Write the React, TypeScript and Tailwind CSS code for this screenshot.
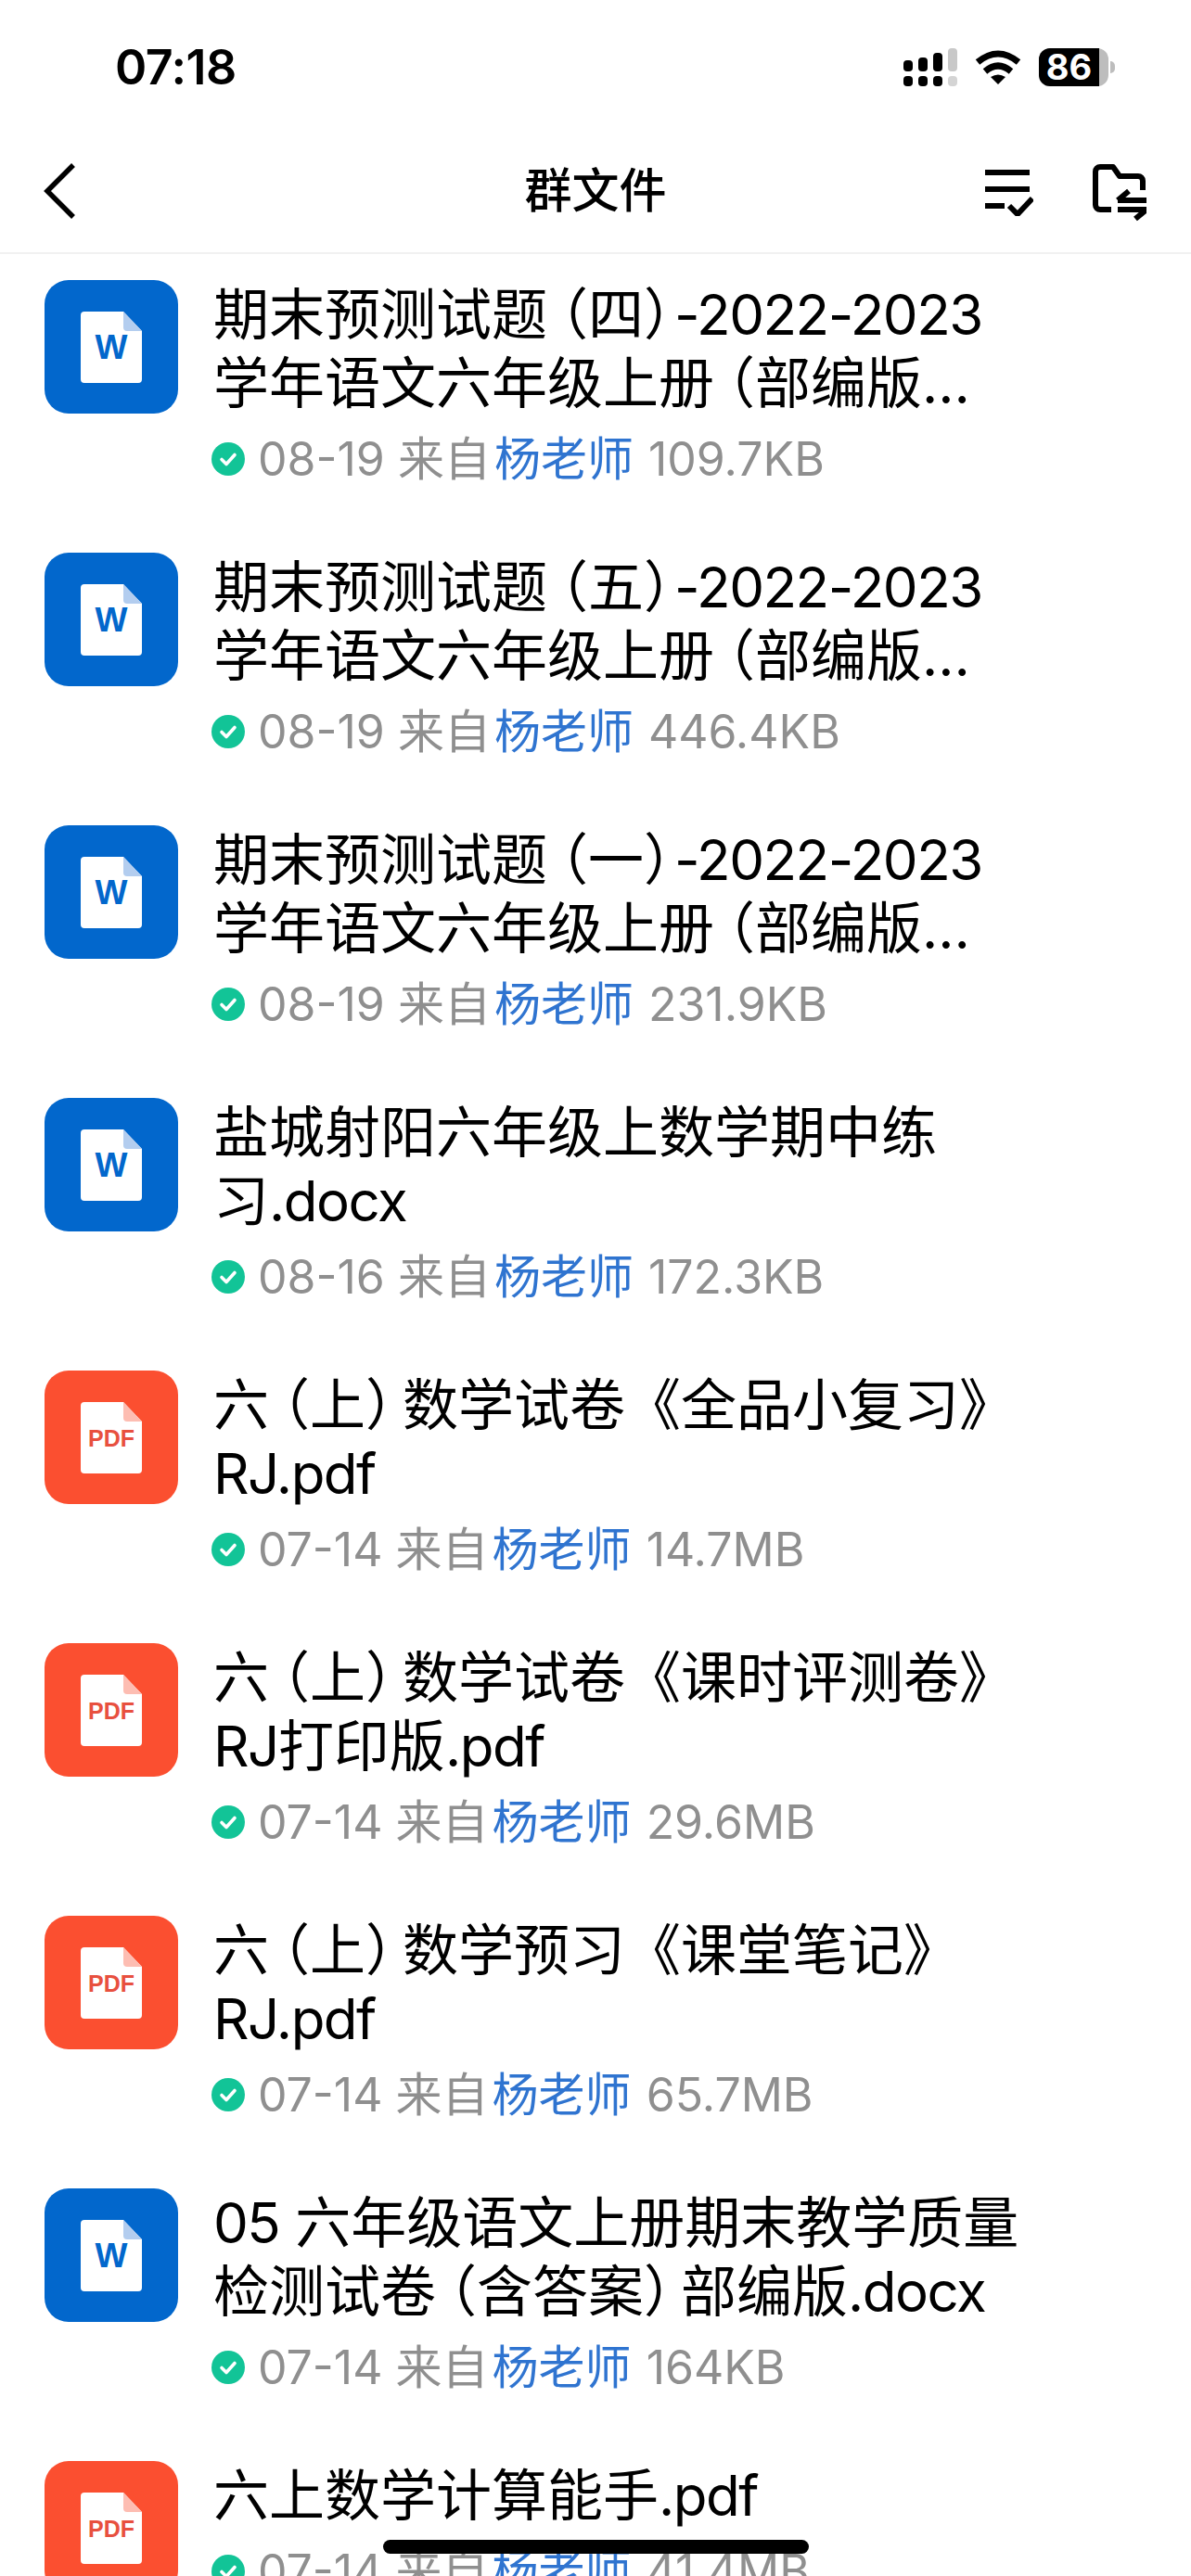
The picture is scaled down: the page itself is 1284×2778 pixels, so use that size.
const font = { fontFamily: '"Inter","Noto Sans CJK SC",sans-serif' };

type Row = { kind: "w" | "pdf"; lines: string[]; date: string; size: string };

const rows: Row[] = [
  { kind: "w", lines: ["期末预测试题（四）-2022-2023", "学年语文六年级上册（部编版…"], date: "08-19", size: "109.7KB" },
  { kind: "w", lines: ["期末预测试题（五）-2022-2023", "学年语文六年级上册（部编版…"], date: "08-19", size: "446.4KB" },
  { kind: "w", lines: ["期末预测试题（一）-2022-2023", "学年语文六年级上册（部编版…"], date: "08-19", size: "231.9KB" },
  { kind: "w", lines: ["盐城射阳六年级上数学期中练", "习.docx"], date: "08-16", size: "172.3KB" },
  { kind: "pdf", lines: ["六（上）数学试卷《全品小复习》", "RJ.pdf"], date: "07-14", size: "14.7MB" },
  { kind: "pdf", lines: ["六（上）数学试卷《课时评测卷》", "RJ打印版.pdf"], date: "07-14", size: "29.6MB" },
  { kind: "pdf", lines: ["六（上）数学预习《课堂笔记》", "RJ.pdf"], date: "07-14", size: "65.7MB" },
  { kind: "w", lines: ["05 六年级语文上册期末教学质量", "检测试卷（含答案）部编版.docx"], date: "07-14", size: "164KB" },
  { kind: "pdf", lines: ["六上数学计算能手.pdf"], date: "07-14", size: "41.4MB" },
];

function Title({ text }: { text: string }) {
  const parts = text.split(/(（|）|[A-Za-z0-9.\-]+)/).filter(Boolean);
  return (
    <div>
      {parts.map((p, i) => {
        if (p === "（") return <span key={i} className="pl-[14px] [font-feature-settings:'halt']">{p}</span>;
        if (p === "）") {
          const beforeDash = (parts[i + 1] || "").startsWith("-");
          return <span key={i} className={`[font-feature-settings:'halt'] ${beforeDash ? "pr-[3px]" : "pr-[10px]"}`}>{p}</span>;
        }
        if (/^[A-Za-z0-9.\-]+$/.test(p)) return <span key={i} className="tracking-[-1.5px]">{p}</span>;
        return <span key={i}>{p}</span>;
      })}
    </div>
  );
}

function FileIcon({ kind }: { kind: "w" | "pdf" }) {
  const w = kind === "w";
  return (
    <div className={`w-[144px] h-[144px] shrink-0 rounded-[26px] flex items-center justify-center ${w ? "bg-[#0267cc]" : "bg-[#fb4f30]"}`}>
      <div className="relative w-[66px] h-[77px] flex items-center justify-center">
        <svg width="66" height="77" viewBox="0 0 66 77" className="absolute inset-0">
          <path d="M4 0H46L66 21V73a4 4 0 0 1-4 4H4a4 4 0 0 1-4-4V4a4 4 0 0 1 4-4Z" fill="#fff" />
          <path d="M46 0L66 21H50a4 4 0 0 1-4-4Z" fill={w ? "#b3cdef" : "#fdbdb2"} />
        </svg>
        <span className={`relative font-bold leading-none ${w ? "text-[37px] text-[#0267cc]" : "text-[25px] text-[#e8503f] mt-[2px]"}`} style={{ fontFamily: '"Liberation Sans",sans-serif' }}>
          {w ? "W" : "PDF"}
        </span>
      </div>
    </div>
  );
}

function Check() {
  return (
    <svg width="36" height="36" viewBox="0 0 36 36" className="shrink-0">
      <circle cx="18" cy="18" r="18" fill="#12c497" />
      <path d="M11 18.5l5 5 9-10" fill="none" stroke="#fff" strokeWidth="3.6" strokeLinecap="round" strokeLinejoin="round" />
    </svg>
  );
}

export default function App() {
  return (
    <div className="relative w-[1284px] h-[2778px] overflow-hidden bg-white text-black" style={font}>
      <div className="h-[144px] pl-[124px] pr-[82px] pt-[45px] flex items-start justify-between">
        <span className="text-[52px] leading-[56px] font-semibold tracking-[-0.5px]">07:18</span>
        <div className="flex items-start gap-[19px] pt-[7px]">
          <svg width="58" height="41" viewBox="0 0 58 41">
            <rect x="0" y="13" width="10" height="12" rx="4" />
            <rect x="16" y="10" width="10" height="15" rx="4" />
            <rect x="32" y="5" width="10" height="20" rx="4" />
            <rect x="48" y="0" width="10" height="25" rx="4" fill="#c8c8c8" />
            <rect x="0" y="30" width="10" height="11" rx="4" />
            <rect x="16" y="30" width="10" height="11" rx="4" />
            <rect x="32" y="30" width="10" height="11" rx="4" />
            <rect x="48" y="30" width="10" height="11" rx="4" fill="#d4d4d4" />
          </svg>
          <svg width="50" height="37" viewBox="0 0 50 37" fill="none" stroke="#000" strokeWidth="7" className="mt-[2px]">
            <path d="M3 13Q25 -5 47 13" />
            <path d="M11 23Q25 11 39 23" />
            <path d="M17 29Q25 24 33 29L25 37Z" fill="#000" stroke="none" />
          </svg>
          <div className="flex items-center gap-[2px]">
            <div className="w-[75px] h-[41px] rounded-[12px] bg-[#bdbdbd] flex">
              <div className="w-[65px] h-full bg-black rounded-l-[12px] flex items-center justify-center text-white text-[38px] font-bold leading-[41px]">86</div>
            </div>
            <div className="w-[5px] h-[13px] rounded-r-full bg-[#bdbdbd]" />
          </div>
        </div>
      </div>

      <div className="h-[130px] border-b-2 border-[#f1f1f1] flex items-center justify-between pl-[46px] pr-[48px] pb-[4px]">
        <svg width="36" height="60" viewBox="0 0 36 60" fill="none" stroke="#000" strokeWidth="5.5">
          <path d="M33 2L5 30l28 28" />
        </svg>
        <span className="absolute left-0 right-0 text-center text-[51px] font-medium leading-[60px]">群文件</span>
        <div className="flex items-start gap-[64px] pt-[4px]">
          <svg width="52" height="50" viewBox="0 0 52 50" fill="none" stroke="#000" strokeWidth="6" className="mt-[6px]">
            <path d="M0 3h48M0 21h48M0 39h21" />
            <path d="M26 39l9 9 16-17" />
          </svg>
          <svg width="58" height="62" viewBox="0 0 58 62" fill="none" stroke="#000" strokeWidth="6" strokeLinejoin="round">
            <path d="M20 49H8a5 5 0 0 1-5-5V8a5 5 0 0 1 5-5h14l7 10h20a5 5 0 0 1 5 5v10" />
            <path d="M27 39h31M39 29L27 39M27 49h31M46 59l12-10" />
          </svg>
        </div>
      </div>

      <div className="pt-[28px]">
        {rows.map((r, i) => (
          <div key={i} className="h-[294px] pl-[48px] flex items-start gap-[36px]">
            <FileIcon kind={r.kind} />
            <div className="min-w-0">
              <div className="text-[60px] leading-[74px] whitespace-nowrap pl-[2px]">
                {r.lines.map((l) => (
                  <Title key={l} text={l} />
                ))}
              </div>
              <div className="mt-[15px] h-[60px] flex items-center gap-[14px] text-[50px] leading-[60px] text-[#8f8f8f] whitespace-nowrap">
                <Check />
                <span>
                  {r.date} 来自<span className="ml-[4px] mr-[2px] text-[#2f74d0]">杨老师</span> {r.size}
                </span>
              </div>
            </div>
          </div>
        ))}
      </div>

      <div className="absolute left-[413px] top-[2739px] w-[459px] h-[15px] rounded-full bg-black" />
    </div>
  );
}
